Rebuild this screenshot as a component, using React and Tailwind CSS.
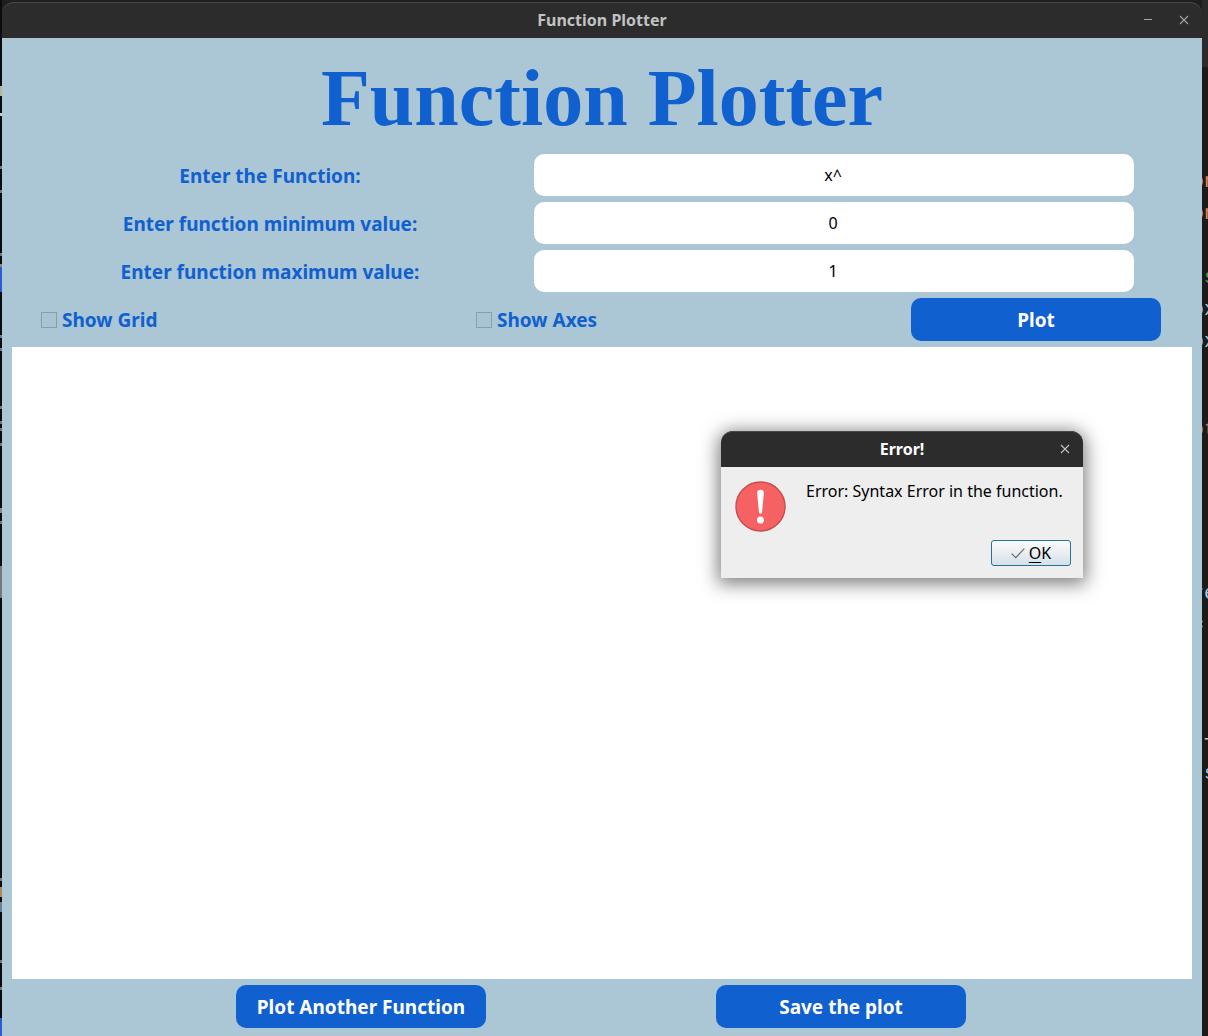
import React from "react";

const fields = [
  { id: "fn", label: "Enter the Function:", value: "x^" },
  { id: "min", label: "Enter function minimum value:", value: "0" },
  { id: "max", label: "Enter function maximum value:", value: "1" },
];

const codeEdge = [
  { before: "o", text: "n", style: "mt-[170px] text-[#d08a70]" },
  { before: "o", text: "n", style: "mt-2 text-[#d08a70]" },
  { before: ".", text: "s", style: "mt-10 text-[#5a9a4f]" },
  { before: "o", text: "x", style: "mt-2 text-[#9cc3e6]" },
  { before: "o", text: "x", style: "mt-2 text-[#9cc3e6]" },
  { before: "o", text: "t", style: "mt-16 text-[#b57a66]" },
  { before: " ", text: ":", style: "mt-[76px] text-[#4f8a45]" },
  { before: "r", text: "e", style: "mt-10 text-[#a9c8e8]" },
  { before: "=", text: " ", style: "mt-2 text-[#4f9a3f]" },
  { before: " ", text: "T", style: "mt-24 text-[#c8c8c8]" },
  { before: " ", text: "s", style: "mt-1 text-[#9cc3e6]" },
];

const leftEdge = [
  "mt-[86px] h-[10px] bg-[#b9b3a4]",
  "mt-[17px] h-[3px] bg-[#c9c9c9]",
  "mt-[50px] h-[3px] bg-[#77777d]",
  "mt-[21px] h-[3px] bg-[#77777d]",
  "mt-[60px] h-[3px] bg-[#77777d]",
  "mt-[8px] h-[3px] bg-[#8d857b]",
  "h-[25px] bg-[#2b5dd0]",
  "mt-[43px] h-[3px] bg-[#6d7f92]",
  "mt-[10px] h-[3px] bg-[#6d7f92]",
  "mt-[55px] h-[3px] bg-[#77777d]",
  "mt-[12px] h-[3px] bg-[#77777d]",
  "mt-[4px] h-[3px] bg-[#77777d]",
  "mt-[12px] h-[3px] bg-[#77777d]",
  "mt-[62px] h-[5px] bg-[#7d8b96]",
  "mt-[8px] h-[3px] bg-[#77777d]",
  "mt-[42px] h-[32px] bg-[#77777d]",
  "mt-[280px] h-[3px] bg-[#77777d]",
  "mt-[6px] h-[10px] bg-[#a98d5d]",
  "mt-[5px] h-[10px] bg-[#6d7f92]",
  "mt-[48px] h-[3px] bg-[#77777d]",
  "mt-[24px] h-[3px] bg-[#77777d]",
];

function CloseIcon() {
  return (
    <svg viewBox="0 0 10 10" className="size-[10px]" fill="none" stroke="currentColor" strokeWidth="1.1">
      <path d="M1 1 9 9M9 1 1 9" />
    </svg>
  );
}

function Action({ children }) {
  return (
    <button className="h-[43px] w-[250px] rounded-[10px] bg-[#1160cf] pt-px text-[19px] font-bold text-white">
      {children}
    </button>
  );
}

function Check({ id, label }) {
  return (
    <div className="flex w-[250px] items-center gap-[5px]">
      <input
        id={id}
        type="checkbox"
        className="size-4 appearance-none border border-[#859fac] bg-[#a9c4d2] checked:bg-[#1160cf]"
      />
      <label htmlFor={id} className="pt-[2px]">{label}</label>
    </div>
  );
}

function ErrorDialog() {
  return (
    <section
      role="dialog"
      aria-labelledby="dialog-title"
      className="absolute top-[84px] left-[709px] w-[362px] rounded-t-xl bg-[#eeeeee] font-normal text-black shadow-[0_3px_18px_3px_rgba(0,0,0,0.5)]"
    >
      <header className="grid h-9 grid-cols-[36px_1fr_36px] items-center rounded-t-xl bg-[#2c2c2c] text-center text-white shadow-[inset_0_1px_0_#484848]">
        <h2 id="dialog-title" className="col-start-2 text-base font-bold">Error!</h2>
        <button aria-label="Close error" className="flex justify-center text-[#c4c4c4]">
          <CloseIcon />
        </button>
      </header>
      <div className="flex gap-5 px-[14px] pt-[14px]">
        <svg viewBox="0 0 52 52" className="size-[51px] shrink-0">
          <circle cx="26" cy="26" r="25" fill="#f66164" stroke="#c64e50" strokeWidth="1.4" />
          <path d="M22.6 12.2Q22.6 8.8 26 8.8T29.4 12.2L27.7 31Q27.4 33.4 26 33.4T24.3 31Z" fill="#fff" />
          <circle cx="26" cy="39.8" r="3.6" fill="#fff" />
        </svg>
        <p className="text-base leading-5">Error: Syntax Error in the function.</p>
      </div>
      <div className="flex justify-end px-3 pt-2 pb-3">
        <button className="flex h-[26px] w-20 items-center justify-center gap-1 rounded-[3px] border border-[#2372a0] bg-linear-to-b from-[#fbfcfc] to-[#d7e0e8] text-base">
          <svg viewBox="0 0 14 12" className="h-3 w-[14px]" fill="none" stroke="#646b70" strokeWidth="1.2">
            <path d="M.7 6.6 4.8 10.6 13.3 1.6" />
          </svg>
          <span><span className="underline underline-offset-3">O</span>K</span>
        </button>
      </div>
    </section>
  );
}

export default function App() {
  return (
    <div className="flex h-screen min-h-[700px] overflow-hidden bg-[#1b1b19] font-['Noto_Sans',sans-serif]">
      <div aria-hidden="true" className="flex w-[2px] shrink-0 flex-col bg-[#0d0b11]">
        {leftEdge.map((style, i) => <i key={i} className={"block shrink-0 " + style} />)}
        <i className="mt-auto block h-[18px] bg-[#2b5dd0]" />
      </div>
      <div className="flex min-w-0 grow flex-col bg-[#1f1f1f] pt-[2px]">
        <header className="grid h-9 shrink-0 grid-cols-[72px_1fr_72px] items-center rounded-t-xl bg-[#2c2c2c] text-center shadow-[inset_0_1px_0_#484848]">
          <div className="col-start-2 text-base font-bold text-[#c2c2c2]">Function Plotter</div>
          <div className="grid grid-cols-2 text-[#a5a5a5]">
            <button aria-label="Minimize" className="flex items-center justify-center">
              <svg viewBox="0 0 8 2" className="h-[2px] w-2"><path d="M0 .5H8" stroke="currentColor" /></svg>
            </button>
            <button aria-label="Close" className="flex justify-center"><CloseIcon /></button>
          </div>
        </header>
        <main className="flex min-h-0 grow flex-col gap-[6px] bg-[#abc6d5] px-[10px] pb-2 text-[19px] font-bold text-[#1160cf]">
          <h1 className="flex h-[110px] shrink-0 items-center justify-center pt-[10px] font-['Liberation_Serif',serif] text-[80px] leading-none font-bold">
            Function Plotter
          </h1>
          {fields.map((f) => (
            <div key={f.id} className="grid shrink-0 grid-cols-[516fr_658fr] items-center gap-[6px]">
              <label htmlFor={f.id} className="pt-[2px] text-center">{f.label}</label>
              <input
                id={f.id}
                defaultValue={f.value}
                className="h-[42px] w-full max-w-[600px] rounded-[10px] bg-white pr-[2px] text-center text-base font-normal text-black"
              />
            </div>
          ))}
          <div className="flex shrink-0 items-center justify-between pr-[31px] pl-[29px]">
            <Check id="grid" label="Show Grid" />
            <Check id="axes" label="Show Axes" />
            <Action>Plot</Action>
          </div>
          <div className="relative min-h-0 grow bg-white"><ErrorDialog /></div>
          <div className="flex shrink-0 justify-center gap-[230px] pr-[2px]">
            <Action>Plot Another Function</Action>
            <Action>Save the plot</Action>
          </div>
        </main>
      </div>
      <div aria-hidden="true" className="flex w-[6px] shrink-0 flex-col items-start overflow-hidden border-t-[67px] border-[#2b2b2b] font-['Liberation_Mono',monospace] text-xl leading-6">
        <div className="-mt-[67px] -ml-[10px]">
          {codeEdge.map((c, i) => (
            <span key={i} className={"block whitespace-pre " + c.style}>{c.before}{c.text}</span>
          ))}
        </div>
      </div>
    </div>
  );
}
